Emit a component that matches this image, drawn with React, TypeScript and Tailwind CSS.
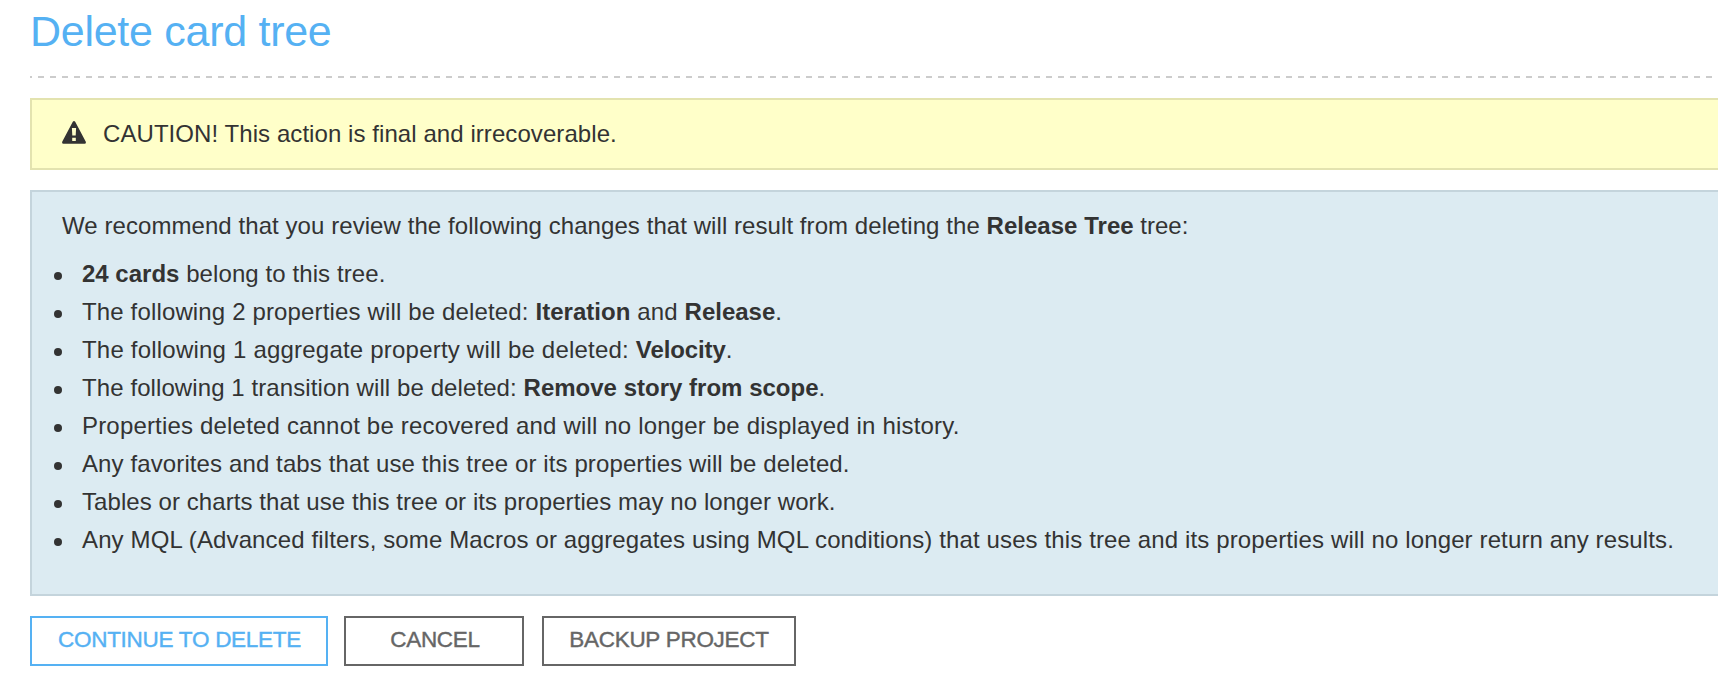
type Part = { text: string; strong?: boolean; track?: string };

const intro: Part[] = [
  { text: "We recommend that you review the following changes that will result from deleting the ", track: "tracking-[0.068px]" },
  { text: "Release Tree", strong: true, track: "tracking-[0.03px]" },
  { text: " tree:" },
];

const items: Part[][] = [
  [
    { text: "24 cards", strong: true },
    { text: " belong to this tree.", track: "tracking-[0.09px]" },
  ],
  [
    { text: "The following 2 properties will be deleted: ", track: "tracking-[0.148px]" },
    { text: "Iteration", strong: true, track: "tracking-[0.04px]" },
    { text: " and ", track: "tracking-[0.14px]" },
    { text: "Release", strong: true },
    { text: "." },
  ],
  [
    { text: "The following 1 aggregate property will be deleted: ", track: "tracking-[0.208px]" },
    { text: "Velocity", strong: true, track: "tracking-[-0.1px]" },
    { text: "." },
  ],
  [
    { text: "The following 1 transition will be deleted: ", track: "tracking-[0.09px]" },
    { text: "Remove story from scope", strong: true, track: "tracking-[0.01px]" },
    { text: "." },
  ],
  [{ text: "Properties deleted cannot be recovered and will no longer be displayed in history.", track: "tracking-[0.18px]" }],
  [{ text: "Any favorites and tabs that use this tree or its properties will be deleted.", track: "tracking-[0.112px]" }],
  [{ text: "Tables or charts that use this tree or its properties may no longer work.", track: "tracking-[0.07px]" }],
  [
    {
      text: "Any MQL (Advanced filters, some Macros or aggregates using MQL conditions) that uses this tree and its properties will no longer return any results.",
      track: "tracking-[0.124px]",
    },
  ],
];

function Parts({ parts }: { parts: Part[] }) {
  return (
    <span>
      {parts.map((p, i) =>
        p.strong ? (
          <strong key={i} className={`font-bold ${p.track ?? ""}`}>{p.text}</strong>
        ) : (
          <span key={i} className={p.track}>{p.text}</span>
        ),
      )}
    </span>
  );
}

function WarningIcon() {
  return (
    <svg viewBox="0 0 24 23" className="mb-[3px] h-[23px] w-[24px]" fill="currentColor" aria-hidden="true">
      <path
        fillRule="evenodd"
        d="M10.8.8Q12-.7 13.2.8L23.8 20.8Q24.3 22.8 22.6 22.8H1.4Q-.3 22.8 .2 20.8ZM9.9 7L10.3 14.6H13.7L14.1 7ZM10.2 16.8V20H13.8V16.8Z"
      />
    </svg>
  );
}

export default function App() {
  return (
    <main className="h-[682px] overflow-hidden bg-white pl-[30px] font-['Liberation_Sans',Arial,sans-serif] text-[24px] text-[#333]">
      <h1 className="h-[76px] pt-[6px] text-[43px] leading-[50px] tracking-[-0.28px] text-[#55b1f3]">Delete card tree</h1>
      <div className="h-[2px] bg-[repeating-linear-gradient(90deg,#ccc_0_2px,transparent_2px_8px,#ccc_8px_12px)]" />
      <div className="mt-[20px] flex h-[72px] items-center border-2 border-r-0 border-[#e3e3af] bg-[#ffffc9] pl-[30px]">
        <WarningIcon />
        <p className="ml-[17px] leading-[38px] tracking-[0.07px]">CAUTION! This action is final and irrecoverable.</p>
      </div>
      <section className="mt-[20px] h-[406px] border-2 border-r-0 border-[#c4d4dc] bg-[#dcebf2] pt-[15px]">
        <p className="pl-[30px] leading-[38px]">
          <Parts parts={intro} />
        </p>
        <ul className="mt-[10px]">
          {items.map((parts, i) => (
            <li key={i} className="flex h-[38px] items-center leading-[38px] whitespace-pre">
              <span className="mt-[4px] mr-[20px] ml-[22px] size-[8px] rounded-full bg-[#333]" />
              <Parts parts={parts} />
            </li>
          ))}
        </ul>
      </section>
      <div className="mt-[20px] flex text-[22.5px] leading-[44px] tracking-[-0.27px]">
        <button className="h-[50px] w-[298px] border-2 border-[#55b1f3] pb-[2px] pl-px text-[#55b1f3] [-webkit-text-stroke:0.4px_#55b1f3]">
          CONTINUE TO DELETE
        </button>
        <button className="ml-[16px] h-[50px] w-[180px] border-2 border-[#666] pb-[2px] pl-[2px] text-[#666] [-webkit-text-stroke:0.4px_#666]">
          CANCEL
        </button>
        <button className="ml-[18px] h-[50px] w-[254px] border-2 border-[#666] pb-[2px] text-[#666] [-webkit-text-stroke:0.4px_#666]">
          BACKUP PROJECT
        </button>
      </div>
    </main>
  );
}
